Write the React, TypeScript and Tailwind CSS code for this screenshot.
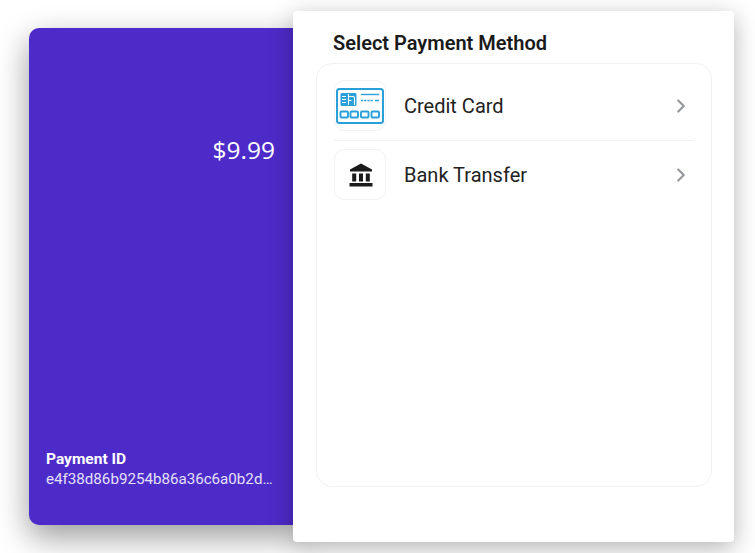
import { ChevronRight } from 'lucide-react';
import type { ReactNode } from 'react';

function CardIcon() {
  return (
    <svg width="48" height="36" viewBox="0 0 48 36" fill="none">
      <rect x="1" y="1" width="46" height="34" rx="2.5" stroke="#2a9fd8" strokeWidth="2" />
      <rect x="4.5" y="5" width="16" height="13" rx="1.5" fill="#2a9fd8" />
      <path d="M6 8.5h4M6 11.5h4M6 14.5h4M12.5 6v11M12.5 8.5h4.5a1.5 1.5 0 0 1 1.5 1.5v7M12.5 12.5h3" stroke="#fff" strokeWidth="1.1" />
      <path d="M25 6.5h18" stroke="#2a9fd8" strokeWidth="1.4" />
      <path d="M25 12.5h12" stroke="#2a9fd8" strokeWidth="1.5" strokeDasharray="2.2 1" />
      <path d="M39 12.5h4" stroke="#2a9fd8" strokeWidth="1.5" />
      <rect x="4.5" y="23.5" width="7.5" height="6" rx="1" stroke="#2a9fd8" strokeWidth="1.9" />
      <rect x="14.5" y="23.5" width="7.5" height="6" rx="1" stroke="#2a9fd8" strokeWidth="1.9" />
      <rect x="25" y="23.5" width="7.5" height="6" rx="1" stroke="#2a9fd8" strokeWidth="1.9" />
      <rect x="35.5" y="23.5" width="7.5" height="6" rx="1" stroke="#2a9fd8" strokeWidth="1.9" />
    </svg>
  );
}

function BankIcon() {
  return (
    <svg className="translate-x-px" width="24" height="24" viewBox="0 0 24 24" fill="#1a1a1a">
      <path d="M12 0.5 L23 6.5 V8.5 H1 V6.5 Z" />
      <rect x="3.2" y="10.5" width="4" height="8" />
      <rect x="10" y="10.5" width="4" height="8" />
      <rect x="16.8" y="10.5" width="4" height="8" />
      <rect x="0.5" y="20" width="23" height="3.5" />
    </svg>
  );
}

function MethodRow({ icon, label }: { icon: ReactNode; label: string }) {
  return (
    <div className="flex h-[51px] items-center">
      <div className="flex h-[51px] w-[52px] shrink-0 items-center justify-center rounded-[10px] border border-[#f3f3f3] bg-white">
        {icon}
      </div>
      <span className="ml-[18px] flex-1 text-[20px] leading-none text-[#222]">{label}</span>
      <ChevronRight className="mr-[2px] text-[#96999e]" size={22} strokeWidth={2.4} />
    </div>
  );
}

export default function App() {
  return (
    <div className="flex h-[553px] w-[755px] items-center overflow-hidden bg-white pl-[29px] font-['Roboto',sans-serif]">
      {/* Order summary */}
      <div className="flex h-[497px] w-[270px] shrink-0 flex-col rounded-l-[10px] bg-[#4d2bc9] pl-[17px] pr-[24px] text-white shadow-[0_12px_32px_rgba(0,0,0,0.4)]">
        <div className="mt-[104px] text-right font-['Open_Sans',sans-serif] text-[24.5px] leading-[36px]">$9.99</div>
        <div className="mt-auto mb-[36px]">
          <div className="text-[15.5px] font-bold leading-[19px]">Payment ID</div>
          <div className="whitespace-nowrap text-[15.15px] leading-[20px] text-white/85">e4f38d86b9254b86a36c6a0b2d…</div>
        </div>
      </div>

      {/* Method picker */}
      <div className="relative -ml-[6px] flex h-[531px] w-[441px] shrink-0 flex-col rounded-[4px] bg-white pl-[23px] pr-[22px] shadow-[0_6px_24px_rgba(0,0,0,0.3)]">
        <h1 className="ml-[17px] mt-[21px] text-[20px] font-semibold leading-[22px] text-[#1a1a1a]">Select Payment Method</h1>
        <div className="mt-[9px] h-[424px] rounded-[16px] border border-[#f1f1f1] px-[17px] pt-[16px]">
          <MethodRow icon={<CardIcon />} label="Credit Card" />
          <div className="mt-[9px] mb-[8px] h-px bg-[#f0f0f0]" />
          <MethodRow icon={<BankIcon />} label="Bank Transfer" />
        </div>
      </div>
    </div>
  );
}
